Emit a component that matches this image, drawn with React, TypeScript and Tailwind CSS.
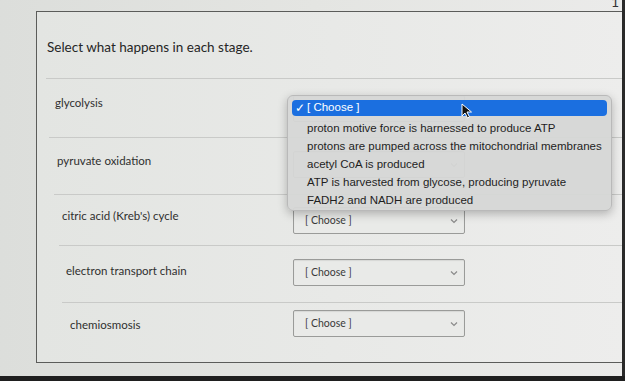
import React from "react";

const rows = [
  { label: "glycolysis", ml: 9, h: 59, pl: 9, pt: 17, mt: 16, hidden: true },
  { label: "pyruvate oxidation", ml: 12, h: 57, pl: 8, pt: 16, mt: 13, hidden: true },
  { label: "citric acid (Kreb's) cycle", ml: 17, h: 51, pl: 8, pt: 14, mt: 12, hidden: false },
  { label: "electron transport chain", ml: 22, h: 57, pl: 7, pt: 18, mt: 13, hidden: false },
  { label: "chemiosmosis", ml: 25, h: 58, pl: 8, pt: 15, mt: 7, hidden: false },
];

const options = [
  "proton motive force is harnessed to produce ATP",
  "protons are pumped across the mitochondrial membranes",
  "acetyl CoA is produced",
  "ATP is harvested from glycose, producing pyruvate",
  "FADH2 and NADH are produced",
];

function Chevron() {
  return (
    <svg width="8" height="6" viewBox="0 0 8 6" className="mr-[6px]">
      <path d="M1 1.5 L4 4.5 L7 1.5" fill="none" stroke="#8a8a8a" strokeWidth="1.2" />
    </svg>
  );
}

function Row({ r }: { r: (typeof rows)[number] }) {
  return (
    <div className="flex border-t border-[#c9cac8]" style={{ marginLeft: r.ml, height: r.h }}>
      <div
        className="shrink-0 text-[11.5px] leading-[14px] text-[#2f2f2f]"
        style={{ width: 256 - r.ml, paddingLeft: r.pl, paddingTop: r.pt }}
      >
        {r.label}
      </div>
      <div style={{ marginTop: r.mt }}>
        <div className="w-[172px] h-[27px] border border-[#9a9b99] rounded-[2px] bg-[#e9eae8] shadow-[inset_0_1px_1px_rgba(0,0,0,0.08)] flex items-center justify-between pl-[11px]">
          <span className={`text-[10.5px] text-[#3a3a3a] ${r.hidden ? "invisible" : ""}`}>[ Choose ]</span>
          <Chevron />
        </div>
      </div>
    </div>
  );
}

export default function App() {
  return (
    <div
      className="relative w-[625px] h-[381px] overflow-hidden bg-gradient-to-r from-[#dcdedb] via-[#e4e5e2] to-[#ebebea]"
      style={{ fontFamily: "Lato, 'Open Sans', sans-serif" }}
    >
      <span className="absolute right-[6px] top-[-9px] text-[14px] text-[#333]">1</span>
      <div className="h-[11px]" />
      <div className="ml-[36px] border-l border-t border-b border-[#5b5c5a] h-[352px] bg-gradient-to-r from-[#e3e5e2] to-[#ededec]">
        <div className="h-[66px] pl-[10px] pt-[26px] text-[13.5px] leading-[18px] text-[#262626]">
          Select what happens in each stage.
        </div>
        {rows.map((r) => (
          <Row key={r.label} r={r} />
        ))}
      </div>

      {/* dropdown menu */}
      <div
        className="absolute left-[287px] top-[95px] w-[325px] h-[116px] rounded-[6px] bg-[#d6d7d6]/95 border border-[#b9b9b9] shadow-[0_3px_10px_rgba(0,0,0,0.25)] px-[4px] pt-[4px]"
        style={{ fontFamily: "'Liberation Sans', Arial, sans-serif" }}
      >
        <div className="h-[16px] rounded-[4px] bg-[#1b6fe0] flex items-center text-white text-[11.5px]">
          <span className="w-[15px] pl-[3px] text-[12px] leading-none">✓</span>
          <span>[ Choose ]</span>
        </div>
        <div className="mt-[4px]">
          {options.map((o) => (
            <div key={o} className="h-[18px] flex items-center pl-[15px] text-[11.5px] text-[#1e1e1e]">
              {o}
            </div>
          ))}
        </div>
      </div>

      {/* cursor */}
      <svg className="absolute left-[461px] top-[103px]" width="12" height="16" viewBox="0 0 12 16">
        <path d="M1 1 L1 13 L4 10 L6.5 15 L8.5 14 L6 9 L10.5 9 Z" fill="#111" stroke="#fff" strokeWidth="1" />
      </svg>

      <div className="absolute right-0 top-0 w-[3px] h-full bg-[#2a2a2a]" />
      <div className="absolute left-0 bottom-0 w-full h-[5px] bg-[#1f1f1f]" />
    </div>
  );
}
